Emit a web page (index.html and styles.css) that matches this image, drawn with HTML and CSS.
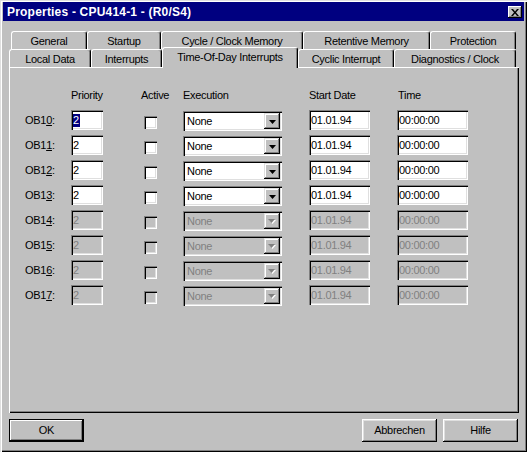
FILE: index.html
```html
<!DOCTYPE html>
<html>
<head>
<meta charset="utf-8">
<link rel="stylesheet" href="styles.css">
</head>
<body>
<div class="window">
  <div class="titlebar">
    <span class="title">Properties - CPU414-1 - (R0/S4)</span>
    <span class="close"><svg width="8" height="7" viewBox="0 0 8 7"><path d="M0 0h2l2 2.5L6 0h2L5 3.5 8 7H6L4 4.5 2 7H0l3-3.5z" fill="#000"/></svg></span>
  </div>
  <div class="content">
    <div class="tabs">
      <div class="tabrow back">
        <div class="tab t1">General</div>
        <div class="tab t2">Startup</div>
        <div class="tab t3">Cycle / Clock Memory</div>
        <div class="tab t4">Retentive Memory</div>
        <div class="tab t5">Protection</div>
      </div>
      <div class="tabrow front">
        <div class="tab u1">Local Data</div>
        <div class="tab u2">Interrupts</div>
        <div class="tab u3 selected">Time-Of-Day Interrupts</div>
        <div class="tab u4">Cyclic Interrupt</div>
        <div class="tab u5">Diagnostics / Clock</div>
      </div>
    </div>
    <div class="panel">
      <div class="grid">
        <div></div>
        <div class="head">Priority</div>
        <div class="head h-active">Active</div>
        <div class="head">Execution</div>
        <div class="head">Start Date</div>
        <div class="head h-time">Time</div>

        <div class="label">OB1<u>0</u>:</div>
        <div class="field prio"><span class="sel">2</span></div>
        <div class="check"></div>
        <div class="combo"><span class="ctext">None</span><span class="drop"><svg width="7" height="4" viewBox="0 0 7 4"><path d="M0 0h7L3.5 4z" fill="#000"/></svg></span></div>
        <div class="field date">01.01.94</div>
        <div class="field time">00:00:00</div>

        <div class="label">OB1<u>1</u>:</div>
        <div class="field prio">2</div>
        <div class="check"></div>
        <div class="combo"><span class="ctext">None</span><span class="drop"><svg width="7" height="4" viewBox="0 0 7 4"><path d="M0 0h7L3.5 4z" fill="#000"/></svg></span></div>
        <div class="field date">01.01.94</div>
        <div class="field time">00:00:00</div>

        <div class="label">OB1<u>2</u>:</div>
        <div class="field prio">2</div>
        <div class="check"></div>
        <div class="combo"><span class="ctext">None</span><span class="drop"><svg width="7" height="4" viewBox="0 0 7 4"><path d="M0 0h7L3.5 4z" fill="#000"/></svg></span></div>
        <div class="field date">01.01.94</div>
        <div class="field time">00:00:00</div>

        <div class="label">OB1<u>3</u>:</div>
        <div class="field prio">2</div>
        <div class="check"></div>
        <div class="combo"><span class="ctext">None</span><span class="drop"><svg width="7" height="4" viewBox="0 0 7 4"><path d="M0 0h7L3.5 4z" fill="#000"/></svg></span></div>
        <div class="field date">01.01.94</div>
        <div class="field time">00:00:00</div>

        <div class="label">OB1<u>4</u>:</div>
        <div class="field prio off">2</div>
        <div class="check off"></div>
        <div class="combo off"><span class="ctext">None</span><span class="drop"><svg width="8" height="5" viewBox="0 0 8 5"><path d="M1 1h7L4.5 5z" fill="#fff"/><path d="M0 0h7L3.5 4z" fill="#808080"/></svg></span></div>
        <div class="field date off">01.01.94</div>
        <div class="field time off">00:00:00</div>

        <div class="label">OB1<u>5</u>:</div>
        <div class="field prio off">2</div>
        <div class="check off"></div>
        <div class="combo off"><span class="ctext">None</span><span class="drop"><svg width="8" height="5" viewBox="0 0 8 5"><path d="M1 1h7L4.5 5z" fill="#fff"/><path d="M0 0h7L3.5 4z" fill="#808080"/></svg></span></div>
        <div class="field date off">01.01.94</div>
        <div class="field time off">00:00:00</div>

        <div class="label">OB1<u>6</u>:</div>
        <div class="field prio off">2</div>
        <div class="check off"></div>
        <div class="combo off"><span class="ctext">None</span><span class="drop"><svg width="8" height="5" viewBox="0 0 8 5"><path d="M1 1h7L4.5 5z" fill="#fff"/><path d="M0 0h7L3.5 4z" fill="#808080"/></svg></span></div>
        <div class="field date off">01.01.94</div>
        <div class="field time off">00:00:00</div>

        <div class="label">OB1<u>7</u>:</div>
        <div class="field prio off">2</div>
        <div class="check off"></div>
        <div class="combo off"><span class="ctext">None</span><span class="drop"><svg width="8" height="5" viewBox="0 0 8 5"><path d="M1 1h7L4.5 5z" fill="#fff"/><path d="M0 0h7L3.5 4z" fill="#808080"/></svg></span></div>
        <div class="field date off">01.01.94</div>
        <div class="field time off">00:00:00</div>
      </div>
    </div>
    <div class="buttons">
      <div class="btn default">OK</div>
      <div class="btn-group">
        <div class="btn">Abbrechen</div>
        <div class="btn">Hilfe</div>
      </div>
    </div>
  </div>
</div>
</body>
</html>
```
FILE: styles.css
```css
* { box-sizing: border-box; margin: 0; padding: 0; }
html, body { width: 527px; height: 452px; overflow: hidden; }
body {
  background: #c0c0c0;
  font-family: "Liberation Sans", Arial, sans-serif;
  font-size: 11px;
  letter-spacing: -0.3px;
  color: #000;
}
.window {
  width: 527px;
  height: 452px;
  padding: 2px 3px 3px 3px;
  background: #c0c0c0;
  box-shadow: inset 1px 1px #dfdfdf, inset 2px 2px #fff, inset -1px -1px #000, inset -2px -2px #808080;
  display: flex;
  flex-direction: column;
}
.titlebar {
  height: 19px;
  background: #000080;
  color: #fff;
  display: flex;
  align-items: center;
  justify-content: space-between;
  padding: 0 2px 0 4px;
}
.title { font-weight: bold; font-size: 12px; letter-spacing: 0.2px; }
.close {
  width: 14px;
  height: 12px;
  margin-top: 1px;
  background: #c0c0c0;
  box-shadow: inset -1px -1px #000, inset 1px 1px #fff, inset -2px -2px #808080;
  display: flex;
  align-items: center;
  justify-content: center;
}
.close svg { display: block; margin-left: -1px; }
.content {
  flex: 1;
  padding: 10px 5px 0 6px;
  display: flex;
  flex-direction: column;
}
.tabs { height: 36px; }
.tabrow { display: flex; height: 18px; }
.tabrow.back { margin-left: 2px; }
.tab {
  height: 18px;
  display: flex;
  align-items: center;
  justify-content: center;
  border-top: 1px solid #fff;
  border-left: 1px solid #fff;
  border-right: 1px solid #000;
  border-radius: 3px 3px 0 0;
  box-shadow: inset -1px 0 #808080;
  background: #c0c0c0;
  white-space: nowrap;
}
.t1 { width: 76px; }
.t2 { width: 74px; }
.t3 { width: 142px; }
.t4 { width: 127px; }
.t5 { width: 86px; }
.u1 { width: 82px; }
.u2 { width: 71px; }
.u3 { width: 136px; }
.u4 { width: 96px; }
.u5 { width: 122px; }
.tab.selected {
  position: relative;
  z-index: 2;
  height: 21px;
  margin-top: -2px;
  padding-bottom: 2px;
}
.panel {
  height: 346px;
  box-shadow: inset 1px 1px #fff, inset -1px -1px #000, inset -2px -2px #808080;
  padding: 22px 0 0 16px;
}
.grid {
  display: grid;
  grid-template-columns: 46px 73px 39px 126px 88px 71px;
  grid-template-rows: 16px repeat(8, 20px);
  row-gap: 5px;
}
.head { line-height: 13px; }
.h-active { margin-left: -3px; }
.h-time { margin-left: 1px; }
.label { display: flex; align-items: center; padding-bottom: 1px; }
.label u { text-decoration-thickness: 1px; text-underline-offset: 1px; }
.field {
  height: 20px;
  background: #fff;
  box-shadow: inset 1px 1px #808080, inset 2px 2px #000, inset -1px -1px #fff, inset -2px -2px #dfdfdf;
  padding: 0 2px;
  display: flex;
  align-items: center;
  line-height: 13px;
}
.prio { width: 32px; }
.date { width: 61px; }
.time { width: 71px; }
.field.off { background: #c0c0c0; color: #808080; }
.sel { background: #000080; color: #fff; padding: 0 1px 0 0; }
.check {
  width: 13px;
  height: 13px;
  margin-top: 6px;
  background: #fff;
  box-shadow: inset 1px 1px #808080, inset 2px 2px #000, inset -1px -1px #fff, inset -2px -2px #dfdfdf;
}
.check.off { background: #c0c0c0; }
.combo {
  width: 99px;
  height: 20px;
  margin-top: 1px;
  background: #fff;
  box-shadow: inset 1px 1px #808080, inset 2px 2px #000, inset -1px -1px #fff, inset -2px -2px #dfdfdf;
  padding: 2px;
  display: flex;
  align-items: center;
  justify-content: space-between;
}
.combo.off { background: #c0c0c0; color: #808080; }
.ctext { padding-left: 2px; }
.drop {
  width: 16px;
  height: 16px;
  background: #c0c0c0;
  box-shadow: inset -1px -1px #000, inset 1px 1px #dfdfdf, inset -2px -2px #808080, inset 2px 2px #fff;
  display: flex;
  align-items: center;
  justify-content: center;
}
.drop svg { display: block; margin-top: 1px; }
.buttons {
  display: flex;
  justify-content: space-between;
  margin-top: 6px;
  padding-right: 1px;
}
.btn-group { display: flex; gap: 6px; }
.btn {
  width: 75px;
  height: 23px;
  background: #c0c0c0;
  box-shadow: inset -1px -1px #000, inset 1px 1px #fff, inset -2px -2px #808080, inset 2px 2px #dfdfdf;
  display: flex;
  align-items: center;
  justify-content: center;
  padding-bottom: 1px;
}
.btn.default {
  box-shadow: inset 0 0 0 1px #000, inset -2px -2px #000, inset 2px 2px #fff, inset -3px -3px #808080;
}
```
